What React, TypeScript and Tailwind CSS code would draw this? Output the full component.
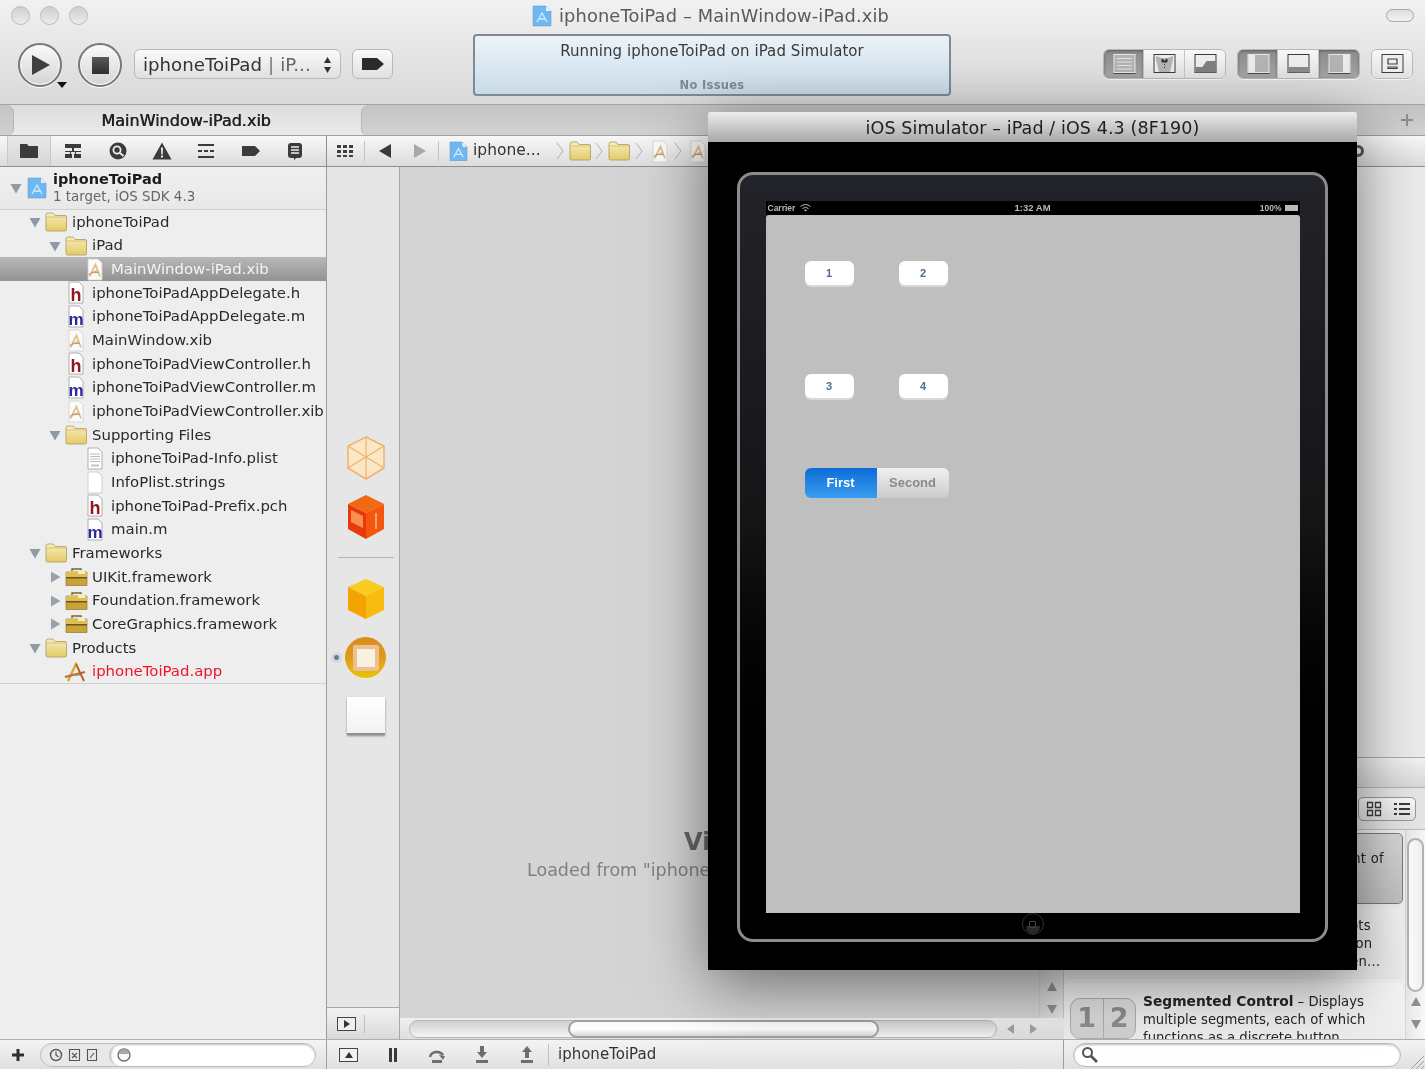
import type { ReactNode } from 'react';

/* small drawn icons */

function Triangle({ open }: { open: boolean }) {
    return (
        <svg width="12" height="12" viewBox="0 0 12 12" className="shrink-0">
            {open ? <path d="M0.5 2h11L6 11.5z" fill="#8e9aa6" /> : <path d="M2 0.5v11L11.5 6z" fill="#98a2ac" />}
        </svg>
    );
}

function FolderIcon() {
    return (
        <svg width="22" height="20" viewBox="0 0 22 20">
            <defs>
                <linearGradient id="folderBody" x1="0" y1="0" x2="0" y2="1">
                    <stop offset="0" stopColor="#f7efbc" />
                    <stop offset="1" stopColor="#e3cb68" />
                </linearGradient>
            </defs>
            <path d="M1 3Q1 1 3 1h5l2 2.500h10q1.500 0 1.500 1.500v12.500q0 1.500-1.500 1.500H2.500Q1 19 1 17.500z" fill="url(#folderBody)" stroke="#ad9a58" strokeWidth="0.8" />
            <path d="M1.500 5h20" stroke="#c8b46c" strokeWidth="0.7" />
        </svg>
    );
}

function PageShape({ fill = '#ffffff', stroke = '#9c9c9c' }: { fill?: string; stroke?: string }) {
    return <path d="M2 1h10l4 4v17H2z" fill={fill} stroke={stroke} strokeWidth="0.8" />;
}

function XibIcon() {
    return (
        <svg width="18" height="23" viewBox="0 0 18 23">
            <PageShape fill="#fafafa" stroke="#d0d0d0" />
            <path d="M3.500 18.500L9.500 6.500l4.500 12" fill="none" stroke="#dcc080" strokeWidth="1.700" />
            <path d="M5 14.500h8" stroke="#b0a478" strokeWidth="1.100" />
            <path d="M2.500 16.500l9-4" stroke="#dc9678" strokeWidth="1.200" />
        </svg>
    );
}

function CodeIcon({ letter }: { letter: 'h' | 'm' }) {
    return (
        <svg width="18" height="23" viewBox="0 0 18 23">
            <PageShape />
            <text x="9" y="19.500" textAnchor="middle" fontFamily="Liberation Sans, sans-serif" fontWeight="700" fontSize={letter === 'h' ? 18 : 17} fill={letter === 'h' ? '#8f1820' : '#2a2a9c'}>
                {letter}
            </text>
        </svg>
    );
}

function PlistIcon() {
    return (
        <svg width="18" height="23" viewBox="0 0 18 23">
            <PageShape />
            <path d="M4 7h10M4 9.500h10M4 12h10M4 14.500h10" stroke="#bdbdbd" strokeWidth="1" />
            <path d="M5 17.500h8v2H5z" fill="#c4c4c4" />
        </svg>
    );
}

function BlankIcon() {
    return (
        <svg width="18" height="23" viewBox="0 0 18 23">
            <PageShape stroke="#c4c4c4" />
        </svg>
    );
}

function BriefcaseIcon() {
    return (
        <svg width="23" height="20" viewBox="0 0 23 20">
            <path d="M7 4V2h9v2" fill="none" stroke="#7c6420" strokeWidth="1.500" />
            <path d="M1 5h21v13.500H1z" fill="#c9a23a" stroke="#86692a" strokeWidth="0.6" />
            <path d="M1 5h21v5H1z" fill="#e0bd50" />
            <path d="M1 10h21v1.500H1z" fill="#6f5518" />
            <path d="M13 3h7v4h-7z" fill="#f4ecc8" />
        </svg>
    );
}

function AppIcon() {
    return (
        <svg width="24" height="20" viewBox="0 0 24 20">
            <path d="M4 19L12 2l8 17" fill="none" stroke="#d8a83a" strokeWidth="2.400" />
            <path d="M1 15l20-5" stroke="#b96a30" strokeWidth="2" />
            <path d="M12 2l8 17" stroke="#b8463a" strokeWidth="1.200" />
            <path d="M8 13h9" stroke="#9a8a50" strokeWidth="1.200" />
        </svg>
    );
}

function ProjectIcon({ size = 22 }: { size?: number }) {
    return (
        <svg width={size} height={size * 1.1} viewBox="0 0 20 22">
            <path d="M1 1h13l5 5v15H1z" fill="#6db8f2" stroke="#7d9cc0" strokeWidth="0.6" />
            <path d="M14 1l5 5h-5z" fill="#e8f2fa" />
            <path d="M5 17l5-9 5 9M7 14h7" fill="none" stroke="#d0ebff" strokeWidth="1.300" />
        </svg>
    );
}

/* navigator selector strip */
function NavGlyph({ kind }: { kind: number }) {
    const c = '#3b3b3b';
    return (
        <svg width="22" height="20" viewBox="0 0 22 20">
            {kind === 0 && <path d="M2 3h7l1.500 2H20v12H2z" fill={c} />}
            {kind === 1 && <path d="M3 3h16v4h-7v3h7v1h-5v2h5v4h-7v-4h1v-2H9v2h1v4H3v-4h5v-2H3v-1h7V7H3z" fill={c} />}
            {kind === 2 && (
                <g>
                    <circle cx="11" cy="10" r="8.500" fill={c} />
                    <circle cx="10" cy="9" r="3.600" fill="none" stroke="#eeeeee" strokeWidth="1.800" />
                    <path d="M13 12l3.500 3" stroke="#eeeeee" strokeWidth="2" />
                </g>
            )}
            {kind === 3 && (
                <g>
                    <path d="M11 1.500L20.500 18.500H1.500z" fill={c} />
                    <path d="M10 6.500h2l-.3 7h-1.400zM10 14.500h2v2h-2z" fill="#eeeeee" />
                </g>
            )}
            {kind === 4 && <path d="M3 3h16v2H3zM3 9h4v2H3zM9 9h4v2H9zM15 9h4v2h-4zM3 15h16v2H3z" fill={c} />}
            {kind === 5 && <path d="M2 5h13l5 5-5 5H2z" fill={c} />}
            {kind === 6 && (
                <g>
                    <path d="M7 2h8q3 0 3 3v9q0 3-3 3h-3l-2 2.500V17H7q-3 0-3-3V5q0-3 3-3z" fill={c} />
                    <path d="M7 6h8M7 9h8M7 12h8" stroke="#eeeeee" strokeWidth="1.300" />
                </g>
            )}
        </svg>
    );
}

/* toolbar segmented control glyphs */
function ViewGlyph({ kind }: { kind: number }) {
    const dark = '#3c3c3c';
    const active = kind === 0 || kind === 3 || kind === 5;
    return (
        <svg width="24" height="24" viewBox="0 0 24 24">
            <rect x="2" y="2.500" width="21" height="18" fill={active ? '#b4b4b4' : '#eeeeee'} stroke={active ? '#e8e8e8' : dark} strokeWidth="1" />
            {active && <path d="M1.500 21.500h22" stroke="#4a4a4a" strokeWidth="1" />}
            {kind === 0 && <path d="M5 6.500h15M5 10h15M5 13.500h15M5 17h15" stroke="#e4e4e4" strokeWidth="1.200" />}
            {kind === 1 && (
                <g>
                    <path d="M4 4l6 2h5l6-2v4l-3 12H7L4 8z" fill="#b5b5b5" />
                    <path d="M10 7l2.500 2L15 7v3h-5zM12.500 12v1M12.500 15v1" stroke="#333333" fill="#333333" />
                </g>
            )}
            {kind === 2 && <path d="M2.500 20.500v-5.500h7l4-6h9.500v11.500z" fill="#808080" />}
            {kind === 3 && <path d="M2.500 3h6.500v17H2.500z" fill="#ececec" />}
            {kind === 4 && <path d="M2.500 15h20v5.500h-20z" fill="#8c8c8c" />}
            {kind === 5 && <path d="M16 3h6.500v17H16z" fill="#ececec" />}
            {kind === 6 && <path d="M8 7h9v5H8zM8 15h9v1.500H8z" fill="#ececec" stroke={dark} strokeWidth="1.200" />}
        </svg>
    );
}

function Segment({ kind, active, last }: { kind: number; active?: boolean; last?: boolean }) {
    return (
        <div
            className={
                'flex w-[40.33px] items-center justify-center ' +
                (active ? 'bg-gradient-to-b from-[#8c8c8c] to-[#a6a6a6] shadow-[inset_0_1px_3px_rgba(0,0,0,0.35)]' : 'bg-gradient-to-b from-[#f8f8f8] to-[#e2e2e2]') +
                (last ? '' : ' border-r border-[#c4c4c4]')
            }
        >
            <ViewGlyph kind={kind} />
        </div>
    );
}

function SegmentGroup({ children }: { children: ReactNode }) {
    return <div className="flex h-[30px] overflow-hidden rounded-[6px] border border-[#b8b8b8] shadow-[0_1px_0_rgba(255,255,255,0.7)]">{children}</div>;
}

function RoundButton({ children }: { children: ReactNode }) {
    return (
        <div className="flex h-[44px] w-[44px] items-center justify-center rounded-full border-2 border-[#777777] bg-gradient-to-b from-[#fafafa] to-[#d4d4d4] shadow-[inset_0_0_0_1px_#f8f8f8,0_1px_0_#ffffff]">
            {children}
        </div>
    );
}

function Toolbar() {
    return (
        <div className="h-[105px] shrink-0 border-b border-[#a2a2a2] bg-gradient-to-b from-[#f1f1f1] to-[#d9d9d9]">
            {/* title row */}
            <div className="relative flex h-[34px] items-center justify-center pb-[2px]">
                <div className="absolute left-[11px] top-[6px] flex gap-[10px]">
                    <span className="h-[19px] w-[19px] rounded-full border border-[#bcbcbc] bg-gradient-to-b from-[#cfcfcf] to-[#ececec]" />
                    <span className="h-[19px] w-[19px] rounded-full border border-[#bcbcbc] bg-gradient-to-b from-[#cfcfcf] to-[#ececec]" />
                    <span className="h-[19px] w-[19px] rounded-full border border-[#bcbcbc] bg-gradient-to-b from-[#cfcfcf] to-[#ececec]" />
                </div>
                <div className="mr-[4px] flex items-center gap-[7px] text-[17.8px] tracking-[0.15px] text-[#5a5a5a]">
                    <ProjectIcon size={20} />
                    <span>iphoneToiPad – MainWindow-iPad.xib</span>
                </div>
                <div className="absolute right-[11px] top-[9px] h-[13px] w-[28px] rounded-full border border-[#a8a8a8] bg-gradient-to-b from-[#dddddd] to-[#f2f2f2]" />
            </div>
            {/* controls row */}
            <div className="flex items-start pl-[18px]">
                <div className="relative mt-[9px]">
                    <RoundButton>
                        <svg width="24" height="24" viewBox="0 0 24 24">
                            <path d="M4 2l18 10-18 10z" fill="#404040" />
                        </svg>
                    </RoundButton>
                    <svg width="10" height="6" viewBox="0 0 10 6" className="absolute -right-[5px] bottom-[-1px]">
                        <path d="M0 0h10L5 6z" fill="#111111" />
                    </svg>
                </div>
                <div className="ml-[16px] mt-[9px]">
                    <RoundButton>
                        <div className="h-[17px] w-[17px] bg-gradient-to-b from-[#5a5a5a] to-[#2e2e2e]" />
                    </RoundButton>
                </div>
                <div className="ml-[12px] mt-[15px] flex h-[30px] w-[207px] items-center rounded-[6px] border border-[#b8b8b8] bg-gradient-to-b from-[#fafafa] to-[#e0e0e0] pl-[8px] pt-[2px] text-[18.2px] text-[#333333]">
                    <span>iphoneToiPad</span>
                    <span className="mx-[6px] text-[#777777]">|</span>
                    <span className="text-[#666666]">iP...</span>
                    <svg width="9" height="18" viewBox="0 0 9 18" className="ml-auto mr-[8px]">
                        <path d="M4.500 1L8 7H1zM4.500 17L1 11h7z" fill="#333333" />
                    </svg>
                </div>
                <div className="ml-[11px] mt-[15px] flex h-[30px] w-[41px] items-center justify-center rounded-[6px] border border-[#b8b8b8] bg-gradient-to-b from-[#fafafa] to-[#e0e0e0]">
                    <svg width="24" height="14" viewBox="0 0 24 14">
                        <path d="M1 1h15l7 6-7 6H1z" fill="#2b2b2b" />
                    </svg>
                </div>
                {/* activity view */}
                <div className="ml-[80px] flex h-[62px] w-[478px] flex-col items-center rounded-[4px] border-2 border-[#7f8a94] bg-gradient-to-b from-[#eaf3f9] via-[#dbe8f1] to-[#c9dbe8] text-[#3a3a3a]">
                    <div className="mt-[4px] text-[15px] tracking-[0.07px]">Running iphoneToiPad on iPad Simulator</div>
                    <div className="mt-auto text-[11.500px] font-bold tracking-[0.3px] text-[#808a92]">No Issues</div>
                </div>
                <div className="ml-[152px] mt-[15px] flex gap-[11px]">
                    <SegmentGroup>
                        <Segment kind={0} active />
                        <Segment kind={1} />
                        <Segment kind={2} last />
                    </SegmentGroup>
                    <SegmentGroup>
                        <Segment kind={3} active />
                        <Segment kind={4} />
                        <Segment kind={5} active last />
                    </SegmentGroup>
                    <SegmentGroup>
                        <Segment kind={6} last />
                    </SegmentGroup>
                </div>
            </div>
        </div>
    );
}

function TabBar() {
    return (
        <div className="flex h-[31px] shrink-0 border-b border-[#a0a0a0] bg-gradient-to-b from-[#dddddd] to-[#eaeaea]">
            <div className="h-full w-[14px] rounded-br-[6px] rounded-tr-[8px] border-r border-[#b4b4b4] bg-gradient-to-b from-[#c4c4c4] to-[#d0d0d0]" />
            <div className="flex w-[347px] items-center justify-center pr-[3px] pt-[2px] text-[16px] text-[#222222]">
                <span className="[text-shadow:0.5px_0_0_#222222]">MainWindow-iPad.xib</span>
            </div>
            <div className="flex h-full flex-1 items-center justify-end rounded-tl-[8px] rounded-bl-[6px] border-l border-[#b4b4b4] bg-gradient-to-b from-[#c4c4c4] to-[#d2d2d2] pr-[12px] text-[#8a8a8a]">
                <svg width="12" height="12" viewBox="0 0 12 12">
                    <path d="M5 0h2v5h5v2H7v5H5V7H0V5h5z" fill="#8e8e8e" />
                </svg>
            </div>
        </div>
    );
}

function Chevron() {
    return (
        <svg width="8" height="20" viewBox="0 0 8 20" className="shrink-0">
            <path d="M1 2l6 8-6 8" fill="none" stroke="#b0b0b0" strokeWidth="1" />
        </svg>
    );
}

function JumpBar() {
    return (
        <div className="flex h-[31px] shrink-0 border-b border-[#8e8e8e] bg-gradient-to-b from-[#f8f8f8] to-[#dcdcdc]">
            <div className="flex w-[327px] shrink-0 items-center border-r border-[#8e8e8e] pl-[7px]">
                <div className="flex h-full w-[44px] items-center justify-center border-x border-[#c8c8c8] bg-gradient-to-b from-[#e8e8e8] to-[#d6d6d6]">
                    <NavGlyph kind={0} />
                </div>
                {[1, 2, 3, 4, 5, 6].map((k) => (
                    <div key={k} className="flex w-[44.4px] items-center justify-center">
                        <NavGlyph kind={k} />
                    </div>
                ))}
            </div>
            <div className="flex flex-1 items-center text-[15.5px] text-[#333333]">
                <svg width="18" height="16" viewBox="0 0 18 16" className="ml-[9px]">
                    <path d="M1 2h4v3H1zM7 2h4v3H7zM13 2h4v3h-4zM1 7h4v3H1zM7 7h4v3H7zM13 7h4v3h-4zM1 12h4v2H1zM7 12h4v2H7zM13 12h4v2h-4z" fill="#3f3f3f" />
                </svg>
                <div className="ml-[10px] h-[20px] w-px bg-[#c4c4c4]" />
                <svg width="12" height="14" viewBox="0 0 12 14" className="ml-[14px]">
                    <path d="M12 0v14L0 7z" fill="#3a3a3a" />
                </svg>
                <svg width="12" height="14" viewBox="0 0 12 14" className="ml-[23px]">
                    <path d="M0 0v14l12-7z" fill="#a8a8a8" />
                </svg>
                <div className="ml-[12px] h-[20px] w-px bg-[#c4c4c4]" />
                <div className="ml-[10px]">
                    <ProjectIcon size={19} />
                </div>
                <span className="ml-[5px]">iphone...</span>
                <div className="ml-[15px]"><Chevron /></div>
                <div className="ml-[5px]"><FolderIcon /></div>
                <div className="ml-[4px]"><Chevron /></div>
                <div className="ml-[5px]"><FolderIcon /></div>
                <div className="ml-[5px]"><Chevron /></div>
                <div className="ml-[8px]"><XibIcon /></div>
                <div className="ml-[5px]"><Chevron /></div>
                <div className="ml-[7px]"><XibIcon /></div>
                <div className="ml-auto mr-[61px] h-[12px] w-[12px] rounded-full border-[3px] border-[#555555]" />
            </div>
        </div>
    );
}

type TreeRow = { label: string; depth: number; icon: ReactNode; arrow?: 'open' | 'closed'; selected?: boolean; red?: boolean };

const rows: TreeRow[] = [
    { label: 'iphoneToiPad', depth: 1, icon: <FolderIcon />, arrow: 'open' },
    { label: 'iPad', depth: 2, icon: <FolderIcon />, arrow: 'open' },
    { label: 'MainWindow-iPad.xib', depth: 3, icon: <XibIcon />, selected: true },
    { label: 'iphoneToiPadAppDelegate.h', depth: 2, icon: <CodeIcon letter="h" /> },
    { label: 'iphoneToiPadAppDelegate.m', depth: 2, icon: <CodeIcon letter="m" /> },
    { label: 'MainWindow.xib', depth: 2, icon: <XibIcon /> },
    { label: 'iphoneToiPadViewController.h', depth: 2, icon: <CodeIcon letter="h" /> },
    { label: 'iphoneToiPadViewController.m', depth: 2, icon: <CodeIcon letter="m" /> },
    { label: 'iphoneToiPadViewController.xib', depth: 2, icon: <XibIcon /> },
    { label: 'Supporting Files', depth: 2, icon: <FolderIcon />, arrow: 'open' },
    { label: 'iphoneToiPad-Info.plist', depth: 3, icon: <PlistIcon /> },
    { label: 'InfoPlist.strings', depth: 3, icon: <BlankIcon /> },
    { label: 'iphoneToiPad-Prefix.pch', depth: 3, icon: <CodeIcon letter="h" /> },
    { label: 'main.m', depth: 3, icon: <CodeIcon letter="m" /> },
    { label: 'Frameworks', depth: 1, icon: <FolderIcon />, arrow: 'open' },
    { label: 'UIKit.framework', depth: 2, icon: <BriefcaseIcon />, arrow: 'closed' },
    { label: 'Foundation.framework', depth: 2, icon: <BriefcaseIcon />, arrow: 'closed' },
    { label: 'CoreGraphics.framework', depth: 2, icon: <BriefcaseIcon />, arrow: 'closed' },
    { label: 'Products', depth: 1, icon: <FolderIcon />, arrow: 'open' },
    { label: 'iphoneToiPad.app', depth: 2, icon: <AppIcon />, red: true },
];

const indents = ['', 'pl-[29px]', 'pl-[49px]', 'pl-[68px]'];

function Sidebar() {
    return (
        <div className="w-[327px] shrink-0 border-r border-[#9c9c9c] bg-[#eeeeee]">
            <div className="flex h-[43px] items-center border-b border-[#d0d0d0] bg-gradient-to-b from-[#f0f0f0] to-[#e8e8e8] pl-[10px]">
                <Triangle open />
                <div className="ml-[5px]"><ProjectIcon size={20} /></div>
                <div className="ml-[6px] leading-[18px] text-[14.500px]">
                    <div className="font-bold text-[#1c1c1c]">iphoneToiPad</div>
                    <div className="text-[13.400px] text-[#666666]">1 target, iOS SDK 4.3</div>
                </div>
            </div>
            <div className="border-b border-[#d0d0d0] text-[14.900px]">
                {rows.map((row) => (
                    <div
                        key={row.label}
                        className={
                            'flex h-[23.68px] items-center ' +
                            indents[row.depth] +
                            (row.selected ? ' bg-gradient-to-b from-[#b8b8b8] to-[#929292] text-[#f4f4f4]' : row.red ? ' text-[#f0142a]' : ' text-[#2a2a2a]')
                        }
                    >
                        <div className="flex w-[12px] shrink-0 items-center justify-center">
                            {row.arrow && <Triangle open={row.arrow === 'open'} />}
                        </div>
                        <div className="ml-[3px] flex w-[24px] shrink-0 items-center justify-center">{row.icon}</div>
                        <span className="ml-[4px] whitespace-nowrap">{row.label}</span>
                    </div>
                ))}
            </div>
        </div>
    );
}

function Dock() {
    return (
        <div className="flex w-[73px] shrink-0 flex-col border-r border-[#a8a8a8] bg-[#e6e6e6]">
            <div className="flex flex-col items-center pl-[5px]">
                <svg width="40" height="46" viewBox="0 0 40 46" className="mt-[268px]">
                    <path d="M20 2L38 11V33L20 44L2 33V11z" fill="#fbe6c8" stroke="#f0b468" strokeWidth="1.500" />
                    <path d="M2 11l18 11 18-11M20 22v22M20 2v20M2 33l18-11 18 11" fill="none" stroke="#f0b468" strokeWidth="1.200" />
                </svg>
                <svg width="40" height="46" viewBox="0 0 40 46" className="mt-[13px]">
                    <path d="M20 1L38 10 20 19 2 10z" fill="#f06a14" />
                    <path d="M2 10l18 9v26L2 35z" fill="#e8380c" />
                    <path d="M38 10L20 19v26l18-10z" fill="#f4560e" />
                    <path d="M5 16l12 6v12L5 28z" fill="#f89050" />
                    <path d="M30 19v16" stroke="#f8a070" strokeWidth="2" />
                </svg>
                <div className="mt-[17px] h-px w-[56px] bg-[#b4b4b4]" />
                <svg width="38" height="42" viewBox="0 0 38 42" className="mt-[20px]">
                    <path d="M19 1L37 9 19 18 1 9z" fill="#f8cc20" />
                    <path d="M1 9l18 9v23L1 32z" fill="#f4a400" />
                    <path d="M37 9L19 18v23l18-9z" fill="#f8bc10" />
                </svg>
                <div className="relative mt-[17px]">
                    <div className="absolute -left-[14px] top-[15px] flex h-[11px] w-[11px] items-center justify-center rounded-full bg-[#d4dae4]">
                        <div className="h-[5px] w-[5px] rounded-full bg-[#6a7890]" />
                    </div>
                    <div className="flex h-[41px] w-[41px] items-center justify-center rounded-full bg-gradient-to-b from-[#d88c1c] via-[#e09a1c] to-[#e8c400]">
                        <div className="h-[26px] w-[26px] rounded-[2px] border-[4px] border-[#eebf90] bg-[#f8f0e0]" />
                    </div>
                </div>
                <div className="mt-[19px] h-[38px] w-[38px] border-b-2 border-[#909090] bg-gradient-to-b from-[#ffffff] to-[#f2f2f2] shadow-[0_1px_2px_rgba(0,0,0,0.4)]" />
            </div>
            <div className="mt-auto flex h-[32px] w-full items-center border-t border-[#a8a8a8] bg-gradient-to-b from-[#f2f2f2] to-[#dadada] pl-[10px]">
                <div className="flex h-[14px] w-[19px] items-center justify-center border border-[#444444] bg-[#eeeeee]">
                    <svg width="6" height="8" viewBox="0 0 6 8">
                        <path d="M0 0v8l6-4z" fill="#333333" />
                    </svg>
                </div>
                <div className="ml-[8px] h-[18px] w-px bg-[#c0c0c0]" />
            </div>
        </div>
    );
}

function Canvas() {
    return (
        <div className="flex flex-1 flex-col bg-[#d4d4d4]">
            <div className="flex min-h-0 flex-1">
                <div className="flex-1 pt-[660px] font-bold">
                    <div className="pl-[284px] text-[24px] leading-[30px] text-[#666666]">View</div>
                    <div className="pl-[127px] whitespace-nowrap text-[17.5px] font-normal leading-[26px] text-[#808080]">Loaded from "iphoneToiPad"</div>
                </div>
                <div className="flex w-[25px] shrink-0 flex-col items-center justify-end border-x border-[#c8c8c8] bg-gradient-to-r from-[#d4d4d4] to-[#e4e4e4] pb-[4px] pt-[800px]">
                    <svg width="12" height="32" viewBox="0 0 12 32">
                        <path d="M6 0l5 9H1zM6 32L1 23h10z" fill="#909090" />
                    </svg>
                </div>
            </div>
            <div className="flex h-[21px] shrink-0 items-center bg-gradient-to-b from-[#f0f0f0] to-[#dedede] pl-[9px]">
                <div className="relative h-[18px] w-[588px] rounded-full border border-[#b8b8b8] bg-gradient-to-b from-[#d0d0d0] to-[#f4f4f4]">
                    <div className="absolute left-[158px] top-[-1px] h-[18px] w-[311px] rounded-full border-2 border-[#a0a0a0] bg-gradient-to-b from-[#fafafa] via-[#ffffff] to-[#d8d8d8]" />
                </div>
                <svg width="30" height="10" viewBox="0 0 30 10" className="ml-[10px]">
                    <path d="M7 0v10L0 5zM23 0v10l7-5z" fill="#a0a0a0" />
                </svg>
            </div>
        </div>
    );
}

function LibraryItem({ selected, children, icon, bodyClass = 'pt-[9px]' }: { selected?: boolean; children: ReactNode; icon?: ReactNode; bodyClass?: string }) {
    return (
        <div
            className={
                'mr-[2px] flex h-[71px] shrink-0 rounded-[5px] pl-[6px] ' +
                (selected ? 'border border-[#7c7c7c] bg-gradient-to-b from-[#d8d8d8] to-[#c2c2c2]' : 'bg-gradient-to-b from-[#f6f6f6] to-[#ebebeb]')
            }
        >
            <div className="w-[73px] shrink-0">{icon}</div>
            <div className={'whitespace-nowrap text-[13.200px] leading-[18px] text-[#252525] ' + bodyClass}>{children}</div>
        </div>
    );
}

function RightPanel() {
    return (
        <div className="flex w-[361px] shrink-0 flex-col bg-[#ececec]">
            <div className="flex-1 border-b border-[#acacac]" />
            <div className="h-[30px] shrink-0 border-b border-[#b4b4b4] bg-gradient-to-b from-[#f2f2f2] to-[#d8d8d8]" />
            <div className="flex h-[42px] shrink-0 items-center justify-end border-b border-[#bdbdbd] bg-[#e6e6e6] pr-[9px]">
                <div className="flex h-[24px] w-[58px] items-center rounded-[5px] border border-[#9a9a9a] bg-gradient-to-b from-[#fbfbfb] to-[#e4e4e4]">
                    <svg width="16" height="16" viewBox="0 0 16 16" className="ml-[7px]">
                        <path d="M1.500 1.500h5v5h-5zM9.500 1.500h5v5h-5zM1.500 9.500h5v5h-5zM9.500 9.500h5v5h-5z" fill="none" stroke="#3a3a3a" strokeWidth="1.300" />
                    </svg>
                    <svg width="16" height="14" viewBox="0 0 16 14" className="ml-[12px]">
                        <path d="M0 1h3v2H0zM5 1h11v2H5zM0 6h3v2H0zM5 6h11v2H5zM0 11h3v2H0zM5 11h11v2H5z" fill="#3a3a3a" />
                    </svg>
                </div>
            </div>
            <div className="flex h-[209px] shrink-0 overflow-hidden bg-[#f1f1f1]">
                <div className="flex flex-1 flex-col gap-[4px] pt-[3px]">
                    <LibraryItem selected bodyClass="pt-[16px] tracking-[0.25px]">
                        <b>Label</b> – A variably sized amount of
                    </LibraryItem>
                    <LibraryItem bodyClass="pt-[9px] tracking-[0.2px]">
                        <b>Round Rect Button</b> – Intercepts
                        <br />
                        touch events and sends an action
                        <br />
                        message to a target object when...
                    </LibraryItem>
                    <LibraryItem
                        icon={
                            <div className="mt-[15px] flex h-[41px] w-[66px] items-center justify-center rounded-[10px] border border-[#b0b0b0] bg-gradient-to-b from-[#e6e6e6] to-[#d0d0d0] text-[27px] font-bold text-[#8e8e8e]">
                                <span className="flex-1 border-r border-[#b0b0b0] text-center">1</span>
                                <span className="flex-1 text-center">2</span>
                            </div>
                        }
                    >
                        <b className="text-[13.800px]">Segmented Control</b> – Displays
                        <br />
                        multiple segments, each of which
                        <br />
                        functions as a discrete button
                    </LibraryItem>
                </div>
                <div className="flex w-[20px] shrink-0 flex-col items-center border-l border-[#d8d8d8] bg-gradient-to-r from-[#e8e8e8] to-[#f8f8f8] pt-[8px]">
                    <div className="h-[154px] w-[17px] rounded-full border-2 border-[#b4b4b4] bg-gradient-to-r from-[#ffffff] to-[#f0f0f0]" />
                    <svg width="12" height="32" viewBox="0 0 12 32" className="mt-[5px]">
                        <path d="M6 0l5 9H1zM6 32L1 23h10z" fill="#8f8f8f" />
                    </svg>
                </div>
            </div>
        </div>
    );
}

function DebugGlyph({ kind }: { kind: number }) {
    const c = '#6e6e6e';
    return (
        <svg width="20" height="20" viewBox="0 0 20 20">
            {kind === 0 && <path d="M6 3h3v14H6zM11 3h3v14h-3z" fill="#3a3a3a" />}
            {kind === 1 && (
                <g>
                    <path d="M3 12a7 6 0 0 1 13-2" fill="none" stroke={c} strokeWidth="2.400" />
                    <path d="M12 10l6 1-2 4z" fill={c} />
                    <path d="M5 15h10v3H5z" fill={c} />
                </g>
            )}
            {kind === 2 && <path d="M8 1h4v6h3l-5 6-5-6h3zM4 15h12v3H4z" fill={c} />}
            {kind === 3 && <path d="M10 1l5 6h-3v6H8V7H5zM4 15h12v3H4z" fill={c} />}
        </svg>
    );
}

function BottomBar() {
    return (
        <div className="flex h-[30px] shrink-0 border-t border-[#b0b0b0] bg-gradient-to-b from-[#f4f4f4] to-[#e0e0e0]">
            <div className="flex w-[327px] shrink-0 items-center border-r border-[#a0a0a0] pl-[12px]">
                <svg width="12" height="12" viewBox="0 0 12 12">
                    <path d="M4.500 0h3v4.500H12v3H7.500V12h-3V7.500H0v-3h4.500z" fill="#2f2f2f" />
                </svg>
                <div className="ml-[16px] flex h-[24px] w-[276px] items-center rounded-full border border-[#bcbcbc] bg-[#e8e8e8]">
                    <svg width="56" height="14" viewBox="0 0 56 14" className="ml-[8px]">
                        <circle cx="7" cy="7" r="5.500" fill="none" stroke="#555555" strokeWidth="1.400" />
                        <path d="M7 3.500V7l2.500 2" fill="none" stroke="#555555" strokeWidth="1.200" />
                        <path d="M20.500 1.500h10v11h-10zM23 5l5 5M28 5l-5 5M38.500 1.500h9v11h-9zM41 10l4-5" fill="none" stroke="#555555" strokeWidth="1.100" />
                    </svg>
                    <div className="ml-[4px] flex h-full flex-1 items-center rounded-full border-l-2 border-[#c8c8c8] bg-white pl-[6px] shadow-[inset_0_1px_2px_rgba(0,0,0,0.25)]">
                        <svg width="14" height="14" viewBox="0 0 14 14">
                            <circle cx="7" cy="7" r="6" fill="#f8f8f8" stroke="#707070" strokeWidth="1.400" />
                            <path d="M2 6a5 5 0 0 1 10 0z" fill="#a8a8a8" />
                        </svg>
                    </div>
                </div>
            </div>
            <div className="flex w-[737px] shrink-0 items-center border-r border-[#a0a0a0] text-[15px] text-[#333333]">
                <div className="ml-[12px] flex h-[14px] w-[19px] items-center justify-center border border-[#444444] bg-[#f2f2f2]">
                    <svg width="8" height="6" viewBox="0 0 8 6">
                        <path d="M0 6h8L4 0z" fill="#333333" />
                    </svg>
                </div>
                <div className="ml-[25px]"><DebugGlyph kind={0} /></div>
                <div className="ml-[24px]"><DebugGlyph kind={1} /></div>
                <div className="ml-[25px]"><DebugGlyph kind={2} /></div>
                <div className="ml-[25px]"><DebugGlyph kind={3} /></div>
                <div className="ml-[11px] h-[22px] w-px bg-[#c0c0c0]" />
                <span className="ml-[9px]">iphoneToiPad</span>
            </div>
            <div className="flex flex-1 items-center pl-[9px]">
                <div className="flex h-[24px] w-[328px] items-center rounded-full border border-[#bcbcbc] bg-white pl-[7px] shadow-[inset_0_1px_2px_rgba(0,0,0,0.25)]">
                    <svg width="17" height="17" viewBox="0 0 17 17">
                        <circle cx="6.500" cy="6.500" r="4.500" fill="none" stroke="#555555" strokeWidth="2" />
                        <path d="M10 10l6 6" stroke="#555555" strokeWidth="2.600" />
                    </svg>
                </div>
                <svg width="14" height="14" viewBox="0 0 14 14" className="ml-auto mr-[1px] mt-[14px]">
                    <path d="M1 14L14 1M6 14l8-8M11 14l3-3" stroke="#a0a0a0" strokeWidth="1" />
                </svg>
            </div>
        </div>
    );
}

function PadButton({ label }: { label: string }) {
    return (
        <div className="flex h-[24px] w-[49px] items-center justify-center rounded-[6px] bg-white font-['Liberation_Sans',sans-serif] text-[11px] font-bold text-[#4c6a94] shadow-[0_2px_0_rgba(220,220,220,0.9)]">
            {label}
        </div>
    );
}

function SimulatorWindow() {
    return (
        <div className="absolute left-[708px] top-[112px] flex h-[858px] w-[649px] flex-col shadow-[0_14px_60px_rgba(0,0,0,0.5)]">
            <div className="flex h-[30px] shrink-0 items-center justify-center rounded-t-[3px] bg-gradient-to-b from-[#ececec] to-[#a8a8a8] pt-[3px] text-[17.5px] tracking-[0.1px] text-[#202020]">
                iOS Simulator – iPad / iOS 4.3 (8F190)
            </div>
            <div className="flex-1 bg-black px-[29px] pt-[30px]">
                {/* device */}
                <div className="flex h-[770px] flex-col items-center rounded-[16px] border-[3px] border-[#8c8c8c] bg-gradient-to-b from-[#222429] via-[#141517] via-45% to-black to-85% px-[26px] pt-[26px]">
                    <div className="flex h-[14px] w-[534px] shrink-0 items-center bg-black px-[2px] font-['Liberation_Sans',sans-serif] text-[8.5px] font-bold text-[#b8b8b8]">
                        <span className="flex flex-1 items-center gap-[5px]">
                            Carrier
                            <svg width="11" height="8" viewBox="0 0 11 8">
                                <path d="M0.500 2.500Q5.500-1.500 10.500 2.500M2.500 4.500Q5.500 2 8.500 4.500" fill="none" stroke="#b8b8b8" strokeWidth="1" />
                                <path d="M5.500 7.500L3.800 6Q5.500 5 7.200 6z" fill="#b8b8b8" />
                            </svg>
                        </span>
                        <span className="text-[9.5px]">1:32 AM</span>
                        <span className="flex flex-1 items-center justify-end gap-[3px]">
                            100%
                            <span className="h-[6px] w-[13px] bg-[#b8b8b8]" />
                        </span>
                    </div>
                    <div className="h-[698px] w-[534px] shrink-0 rounded-t-[3px] bg-[#bfbfbf] pl-[39px] pt-[46px]">
                        <div className="flex gap-[45px]">
                            <PadButton label="1" />
                            <PadButton label="2" />
                        </div>
                        <div className="mt-[89px] flex gap-[45px]">
                            <PadButton label="3" />
                            <PadButton label="4" />
                        </div>
                        <div className="mt-[70px] flex h-[30px] w-[144px] overflow-hidden rounded-[6px] font-['Liberation_Sans',sans-serif] text-[13px] font-bold">
                            <div className="flex w-[72px] items-center justify-center bg-gradient-to-b from-[#0a6cd8] to-[#3a9cf0] text-white">First</div>
                            <div className="flex flex-1 items-center justify-center bg-gradient-to-b from-[#f0f0f0] to-[#cccccc] text-[#8a8a8a]">Second</div>
                        </div>
                    </div>
                    <div className="relative h-[22px] w-[22px] rounded-full border border-[#2e2e2e]">
                        <div className="absolute bottom-0 left-[3px] h-[8px] w-[14px] rounded-b-full bg-[#2a2a2a]" />
                        <div className="absolute left-[6.500px] top-[6.500px] h-[7px] w-[7px] rounded-[1px] border border-[#444444]" />
                    </div>
                </div>
            </div>
        </div>
    );
}

export default function App() {
    return (
        <div className="relative flex h-[1069px] w-[1425px] flex-col overflow-hidden bg-[#ececec] font-['DejaVu_Sans',sans-serif] blur-[0.4px]">
            <Toolbar />
            <TabBar />
            <JumpBar />
            <div className="flex min-h-0 flex-1">
                <Sidebar />
                <Dock />
                <Canvas />
                <RightPanel />
            </div>
            <BottomBar />
            <SimulatorWindow />
        </div>
    );
}
